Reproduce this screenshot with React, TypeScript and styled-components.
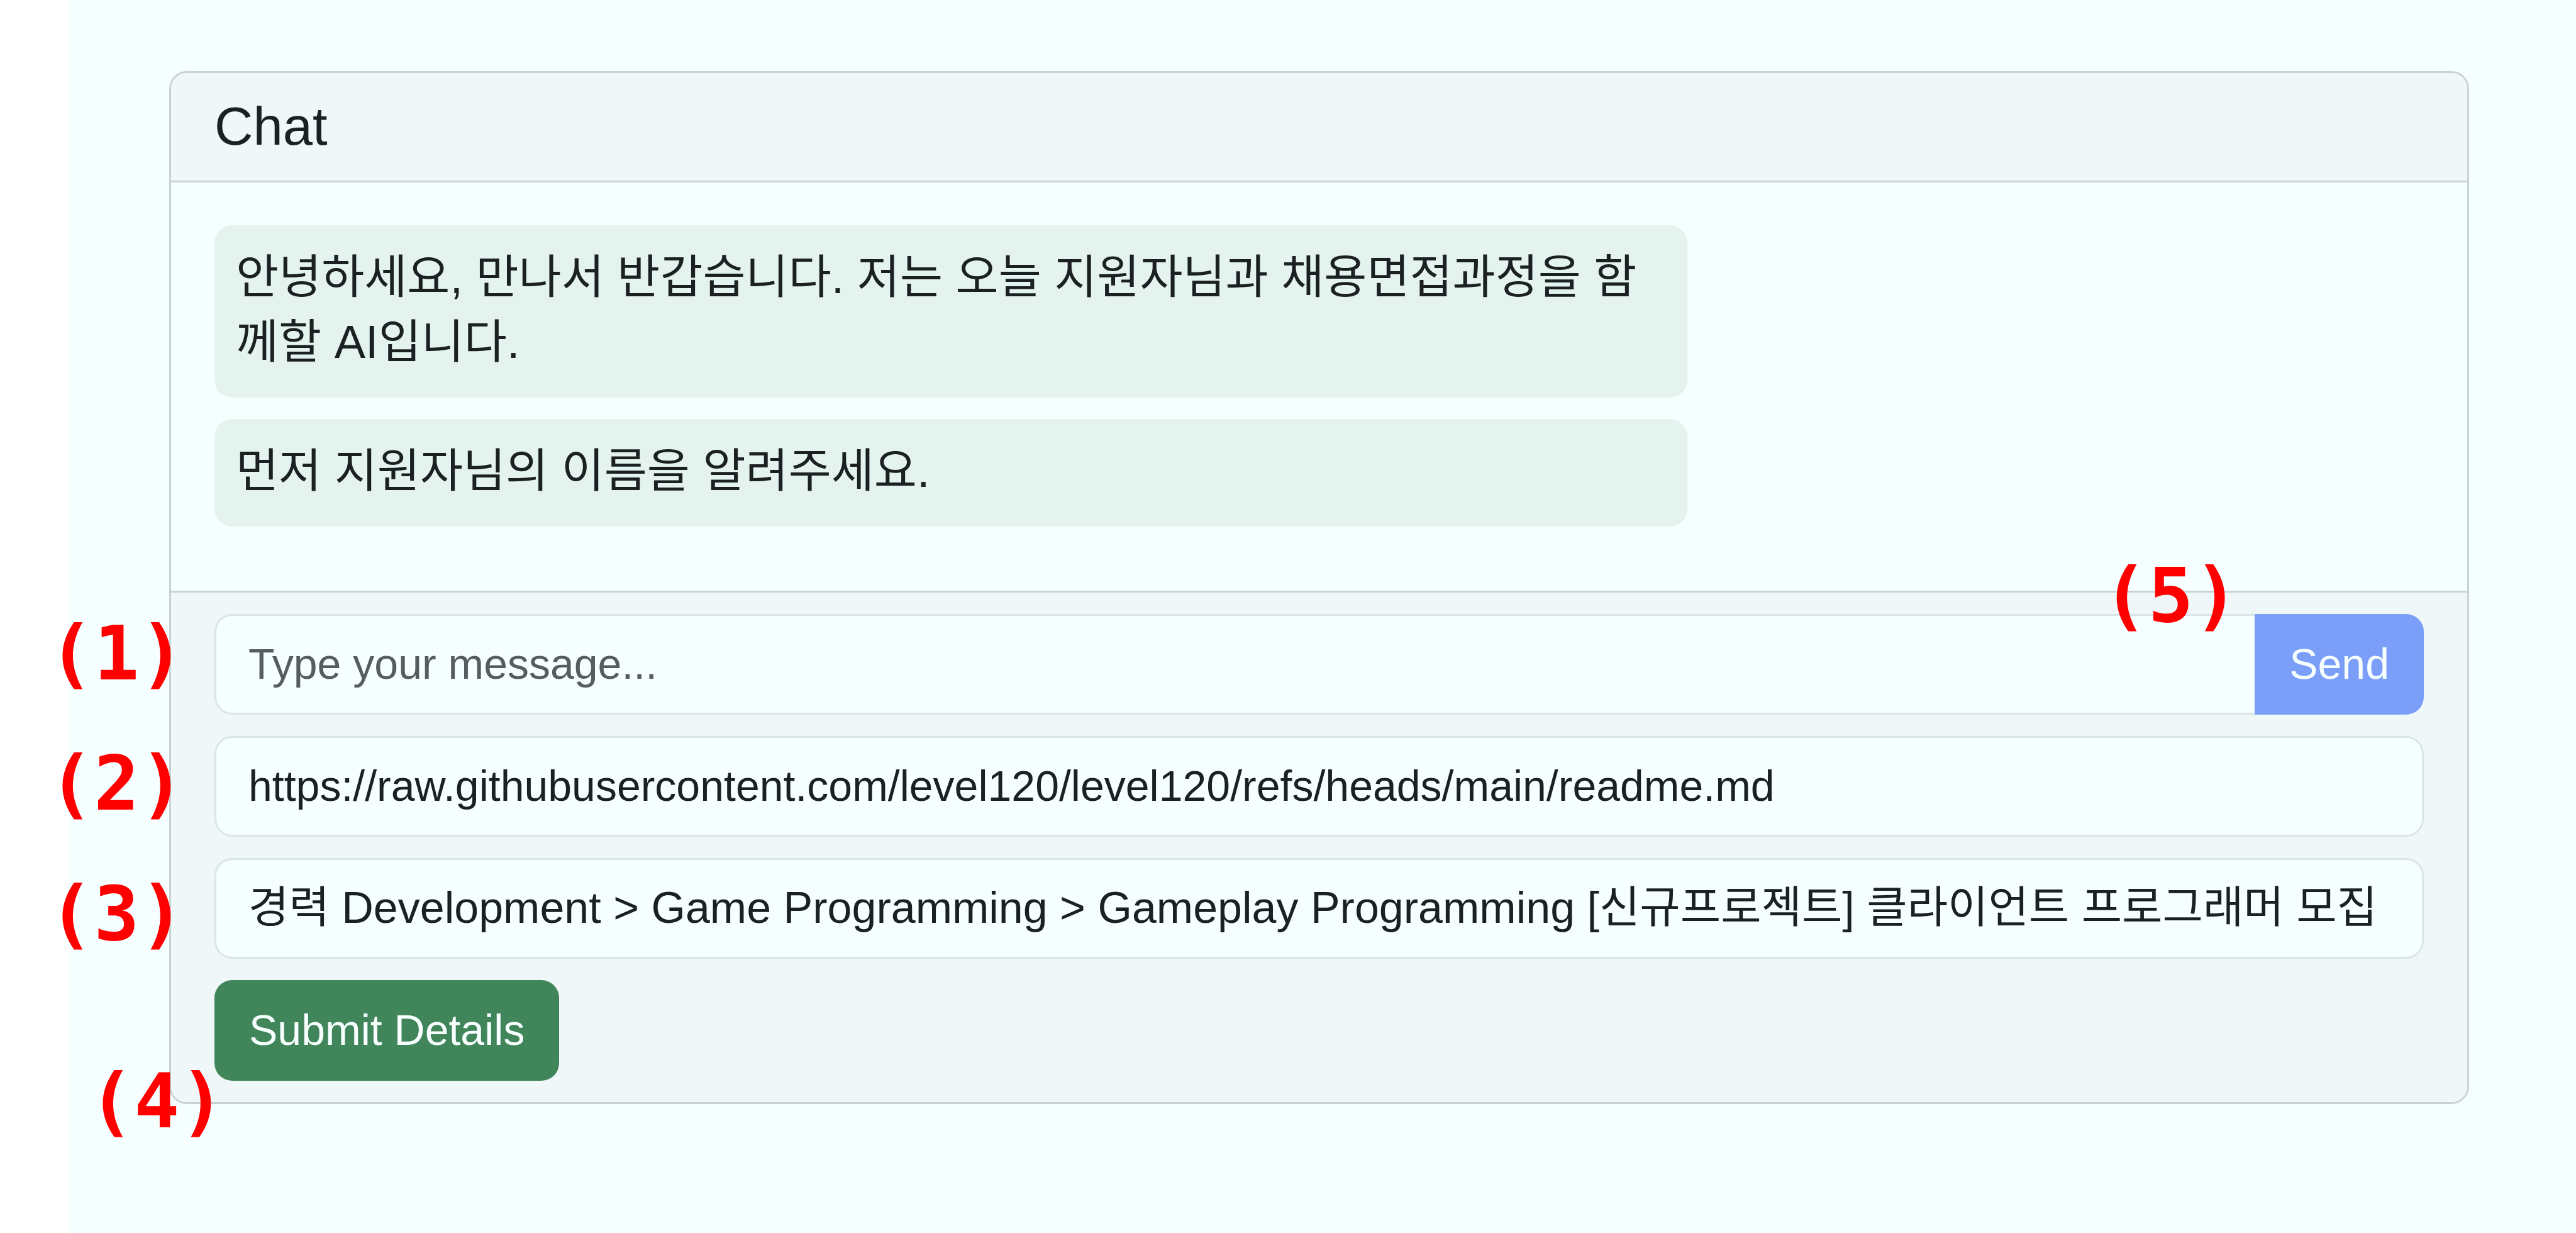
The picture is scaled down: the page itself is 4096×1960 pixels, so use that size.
import React from "react";
import styled, { createGlobalStyle } from "styled-components";

const sans = `"Liberation Sans", "Noto Sans CJK KR", sans-serif`;

const GlobalStyle = createGlobalStyle`
  *, *::before, *::after { box-sizing: border-box; }
  body { margin: 0; background: #ffffff; font-family: ${sans}; color: #1b2023; }
`;

const Page = styled.main`
  min-height: 100vh;
  margin-left: 110px;
  padding: 113px 170px 113px 159px;
  background: #f6ffff;
`;

const Card = styled.section`
  border: 3px solid #cad3d3;
  border-radius: 28px;
`;

const CardHeader = styled.header`
  padding: 33px 69px 35px;
  border-bottom: 3px solid #cad3d3;
  border-radius: 25px 25px 0 0;
  background: #eff7f9;
`;

const Title = styled.h5`
  margin: 0;
  font-size: 85px;
  line-height: 103px;
  font-weight: 400;
`;

const Messages = styled.div`
  display: flex;
  flex-direction: column;
  align-items: flex-start;
  gap: 34px;
  padding: 68px 69px 102px;
`;

const Bubble = styled.div`
  width: 66.6667%;
  padding: 31px 34px 37px;
  border-radius: 28px;
  background: #e4f3ed;
  font-size: 74px;
  line-height: 103px;
  word-break: break-all;
`;

const Footer = styled.form`
  display: flex;
  flex-direction: column;
  gap: 34px;
  padding: 34px 69px;
  border-top: 3px solid #cad3d3;
  border-radius: 0 0 25px 25px;
  background: #eff7f9;
`;

const Row = styled.div`
  position: relative;
  display: flex;
`;

const TextBox = styled.input<{ $joined?: boolean; $korean?: boolean }>`
  flex: 1;
  min-width: 0;
  height: 160px;
  margin: 0;
  padding: ${(p) => (p.$korean ? "0 51px 16px" : "0 51px 2px")};
  border: 3px solid #dae5e8;
  border-right-width: ${(p) => (p.$joined ? "0" : "3px")};
  border-radius: ${(p) => (p.$joined ? "28px 0 0 28px" : "28px")};
  outline: none;
  background: #f6ffff;
  color: #1b2023;
  font-family: ${sans};
  font-size: ${(p) => (p.$korean ? "70px" : "68px")};
  &::placeholder {
    color: #575c5f;
    opacity: 1;
  }
`;

const Button = styled.button<{ $tone: "send" | "submit" }>`
  height: 160px;
  padding: 0 55px 2px;
  border: 0;
  border-radius: ${(p) => (p.$tone === "send" ? "0 28px 28px 0" : "28px")};
  background: ${(p) => (p.$tone === "send" ? "#7b9ff9" : "#41865a")};
  color: #f8ffff;
  font-family: ${sans};
  font-size: 68px;
  white-space: nowrap;
`;

const Marker = styled.span<{ $x: number; $y: number; $fromRight?: boolean }>`
  position: absolute;
  top: ${(p) => p.$y}px;
  ${(p) => (p.$fromRight ? "right" : "left")}: ${(p) => p.$x}px;
  color: #ff0000;
  font-family: "DejaVu Sans Mono", monospace;
  font-size: 120px;
  line-height: 120px;
  font-weight: 700;
  pointer-events: none;
`;

const messages = [
  "안녕하세요, 만나서 반갑습니다. 저는 오늘 지원자님과 채용면접과정을 함께할 AI입니다.",
  "먼저 지원자님의 이름을 알려주세요.",
];

export default function App() {
  return (
    <>
      <GlobalStyle />
      <Page>
        <Card>
          <CardHeader>
            <Title>Chat</Title>
          </CardHeader>
          <Messages>
            {messages.map((text) => (
              <Bubble key={text}>{text}</Bubble>
            ))}
          </Messages>
          <Footer onSubmit={(e) => e.preventDefault()}>
            <Row>
              <TextBox $joined type="text" placeholder="Type your message..." aria-label="Message" />
              <Button $tone="send" type="button">Send</Button>
              <Marker $x={-264} $y={3}>(1)</Marker>
              <Marker $fromRight $x={294} $y={-89}>(5)</Marker>
            </Row>
            <Row>
              <TextBox
                type="text"
                aria-label="Resume URL"
                defaultValue="https://raw.githubusercontent.com/level120/level120/refs/heads/main/readme.md"
              />
              <Marker $x={-264} $y={16}>(2)</Marker>
            </Row>
            <Row>
              <TextBox
                $korean
                type="text"
                aria-label="Job posting"
                defaultValue="경력 Development > Game Programming > Gameplay Programming [신규프로젝트] 클라이언트 프로그래머 모집"
              />
              <Marker $x={-264} $y={29}>(3)</Marker>
            </Row>
            <Row>
              <Button $tone="submit" type="submit">Submit Details</Button>
              <Marker $x={-200} $y={133}>(4)</Marker>
            </Row>
          </Footer>
        </Card>
      </Page>
    </>
  );
}
